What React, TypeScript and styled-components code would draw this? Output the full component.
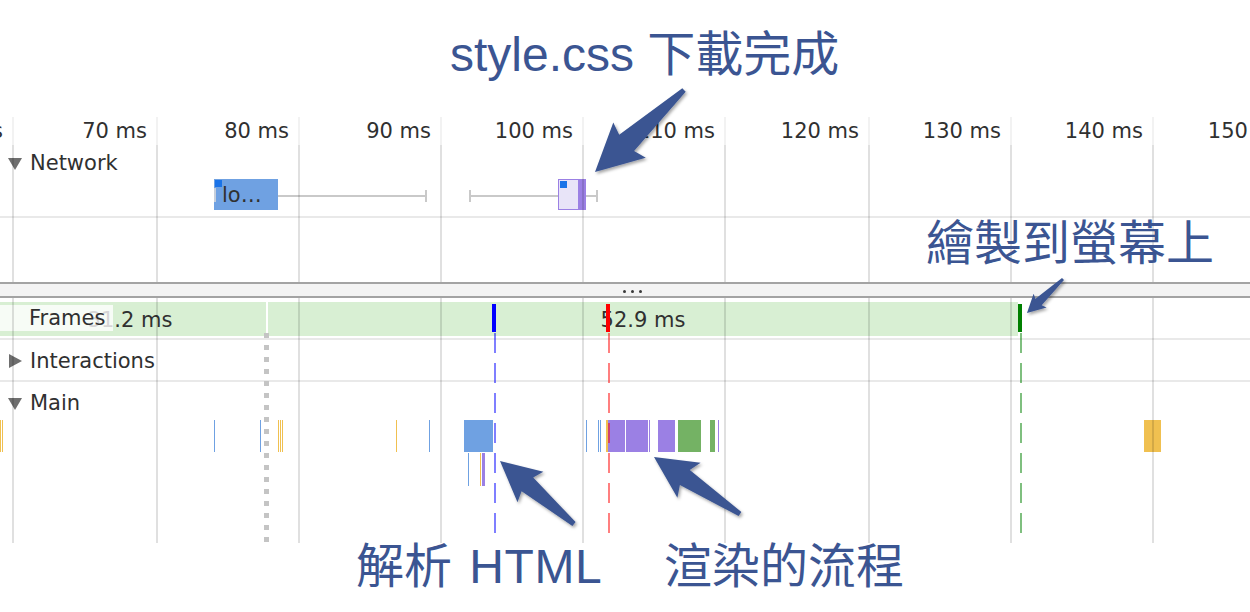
import React from "react";
import styled, { createGlobalStyle } from "styled-components";

const GlobalStyle = createGlobalStyle`
  html, body { margin: 0; padding: 0; background: #ffffff; }
  body { overflow: hidden; }
`;

const UI_FONT = `"DejaVu Sans", "Liberation Sans", sans-serif`;
const NOTE_FONT = `"Liberation Sans", "Noto Sans CJK TC", sans-serif`;
const NOTE_COLOR = "#3b5592";

const LINES = [13, 157, 299, 441, 583, 725, 869, 1011, 1153];

const COLORS = {
  B: "#6fa1e2",
  Y: "#f0c050",
  P: "#9b80e4",
  G: "#74b264",
};

type Ev = { x: number; w: number; c: keyof typeof COLORS; level: 0 | 1 };

const MAIN_EVENTS: Ev[] = [
  { x: 0, w: 1, c: "Y", level: 0 },
  { x: 2, w: 1, c: "Y", level: 0 },
  { x: 214, w: 1, c: "B", level: 0 },
  { x: 260, w: 1, c: "B", level: 0 },
  { x: 278, w: 1, c: "Y", level: 0 },
  { x: 280, w: 1, c: "Y", level: 0 },
  { x: 282, w: 1, c: "Y", level: 0 },
  { x: 396, w: 1, c: "Y", level: 0 },
  { x: 429, w: 1, c: "B", level: 0 },
  { x: 464, w: 29, c: "B", level: 0 },
  { x: 586, w: 1, c: "B", level: 0 },
  { x: 598, w: 1, c: "B", level: 0 },
  { x: 600, w: 1, c: "B", level: 0 },
  { x: 606, w: 1.5, c: "Y", level: 0 },
  { x: 608, w: 17, c: "P", level: 0 },
  { x: 626, w: 22, c: "P", level: 0 },
  { x: 648.5, w: 1, c: "P", level: 0 },
  { x: 658, w: 17, c: "P", level: 0 },
  { x: 678, w: 23, c: "G", level: 0 },
  { x: 710, w: 5, c: "G", level: 0 },
  { x: 718, w: 1, c: "P", level: 0 },
  { x: 1144, w: 17, c: "Y", level: 0 },
  { x: 468, w: 1, c: "B", level: 1 },
  { x: 480, w: 1, c: "Y", level: 1 },
  { x: 482, w: 3, c: "P", level: 1 },
];

const Root = styled.div`
  position: relative;
  width: 1250px;
  height: 612px;
  overflow: hidden;
  background: #ffffff;
  font-family: ${UI_FONT};
  font-size: 21px;
  color: #303030;
`;

const Timeline = styled.div`
  display: flex;
  flex-direction: column;
`;

const TopGap = styled.div`
  height: 117px;
  flex: none;
`;

const Pane = styled.div<{ $h: number }>`
  position: relative;
  height: ${(p) => p.$h}px;
  flex: none;
  display: flex;
  flex-direction: column;
`;

const GridLayer = styled.div`
  position: absolute;
  inset: 0;
  pointer-events: none;
  z-index: 4;
`;

const GridLine = styled.div<{ $x: number; $head?: boolean }>`
  position: absolute;
  top: 0;
  bottom: 0;
  left: ${(p) => p.$x - 1}px;
  width: 2px;
  background: ${(p) =>
    p.$head
      ? "linear-gradient(to bottom, rgba(0,0,0,0.05) 0 28px, rgba(0,0,0,0.12) 28px)"
      : "rgba(0,0,0,0.12)"};
`;

const Ruler = styled.div`
  display: flex;
  height: 28px;
  flex: none;
  margin-left: -130px;
`;

const RulerCell = styled.div<{ $w: number }>`
  width: ${(p) => p.$w}px;
  flex: none;
  box-sizing: border-box;
  padding-right: 10px;
  text-align: right;
  line-height: 28px;
  white-space: nowrap;
`;

const TrackHeader = styled.div<{ $h: number; $pt?: number }>`
  height: ${(p) => p.$h}px;
  flex: none;
  display: flex;
  align-items: center;
  gap: 8px;
  padding-left: 8px;
  padding-top: ${(p) => p.$pt ?? 0}px;
  box-sizing: border-box;
  white-space: nowrap;
`;

const TriangleDown = styled.span`
  width: 0;
  height: 0;
  border-left: 7px solid transparent;
  border-right: 7px solid transparent;
  border-top: 12px solid #6e6e6e;
  margin-top: 2px;
`;

const TriangleRight = styled.span`
  width: 0;
  height: 0;
  border-top: 7px solid transparent;
  border-bottom: 7px solid transparent;
  border-left: 13px solid #6e6e6e;
  margin-left: 1px;
`;

const Track = styled.div<{ $h: number }>`
  position: relative;
  height: ${(p) => p.$h}px;
  flex: none;
`;

const Divider = styled.div<{ $mt?: number }>`
  height: 2px;
  flex: none;
  margin-top: ${(p) => p.$mt ?? 0}px;
  background: #e9e9e9;
`;

const Blank = styled.div`
  flex: 1;
`;

const Whisker = styled.div<{ $x: number; $w: number; $start?: boolean; $end?: boolean }>`
  position: absolute;
  left: ${(p) => p.$x}px;
  width: ${(p) => p.$w}px;
  top: 17px;
  height: 2px;
  background: #c9c9c9;
  &::before,
  &::after {
    content: "";
    position: absolute;
    top: -5px;
    width: 2px;
    height: 12px;
    background: #c9c9c9;
  }
  &::before {
    left: 0;
    display: ${(p) => (p.$start ? "block" : "none")};
  }
  &::after {
    right: 0;
    display: ${(p) => (p.$end ? "block" : "none")};
  }
`;

const RequestBox = styled.div<{ $x: number; $w: number; $variant: "doc" | "css" }>`
  position: absolute;
  left: ${(p) => p.$x}px;
  width: ${(p) => p.$w}px;
  top: 1px;
  height: 31px;
  box-sizing: border-box;
  display: flex;
  align-items: center;
  overflow: hidden;
  background: ${(p) => (p.$variant === "doc" ? "#6fa1e2" : "#e8e4f8")};
  border: ${(p) => (p.$variant === "css" ? "1px solid #9b80e4" : "none")};
  padding-left: 8px;
  white-space: nowrap;
`;

const RequestIcon = styled.span`
  position: absolute;
  left: 1px;
  top: 1px;
  width: 7px;
  height: 7px;
  background: #1a73e8;
`;

const WaitStrip = styled.span`
  position: absolute;
  left: 0;
  top: 9px;
  bottom: 8px;
  width: 2px;
  background: #c6cfdc;
`;

const ReceiveStrip = styled.span`
  position: absolute;
  right: 0;
  top: 0;
  bottom: 0;
  width: 7px;
  background: #9b80e4;
`;

const Splitter = styled.div`
  height: 16px;
  flex: none;
  box-sizing: border-box;
  border-top: 2px solid #a3a3a3;
  border-bottom: 2px solid #a3a3a3;
  background: #f3f3f3;
  display: flex;
  align-items: center;
  justify-content: center;
  gap: 5px;
  padding-left: 15px;
  padding-top: 2px;
`;

const Dot = styled.span`
  width: 3px;
  height: 3px;
  border-radius: 50%;
  background: #3a3a3a;
`;

const FramesRow = styled.div`
  position: relative;
  margin-top: 4px;
  height: 34px;
  flex: none;
  display: flex;
  gap: 2px;
`;

const FrameBlock = styled.div<{ $w: number }>`
  width: ${(p) => p.$w}px;
  flex: none;
  background: #d8efd3;
  display: flex;
  align-items: center;
  justify-content: center;
  white-space: nowrap;
  padding-top: 1px;
  box-sizing: border-box;
`;

const FrameText = styled.span<{ $dx?: number }>`
  margin-left: ${(p) => p.$dx ?? 0}px;
`;

const FramesLabel = styled.div`
  position: absolute;
  left: 0;
  top: 3px;
  width: 113px;
  height: 26px;
  box-sizing: border-box;
  padding-left: 29px;
  background: rgba(255, 255, 255, 0.8);
  display: flex;
  align-items: center;
`;

const Event = styled.div<{ $x: number; $w: number; $c: string; $level: number }>`
  position: absolute;
  left: ${(p) => p.$x}px;
  width: ${(p) => p.$w}px;
  top: ${(p) => (p.$level === 0 ? 0 : 33)}px;
  height: ${(p) => (p.$level === 0 ? 32 : 33)}px;
  background: ${(p) => p.$c};
`;

const MarkerLayer = styled.div`
  position: absolute;
  inset: 0;
  pointer-events: none;
  z-index: 5;
`;

const Marker = styled.div<{ $x: number; $c: string }>`
  position: absolute;
  left: ${(p) => p.$x}px;
  top: 6px;
  width: 4px;
  height: 28px;
  background: ${(p) => p.$c};
`;

const DashLine = styled.div<{ $x: number; $c: string }>`
  position: absolute;
  left: ${(p) => p.$x}px;
  top: 35px;
  bottom: 0;
  width: 2px;
  background: repeating-linear-gradient(
    to bottom,
    ${(p) => p.$c} 0 20px,
    transparent 20px 30px
  );
`;

const DotLine = styled.div<{ $x: number }>`
  position: absolute;
  left: ${(p) => p.$x}px;
  top: 35px;
  bottom: 0;
  width: 5px;
  background: repeating-linear-gradient(
    to bottom,
    #c4c4c4 0 5px,
    transparent 5px 12px
  );
`;

const ArrowLayer = styled.svg`
  position: absolute;
  left: 0;
  top: 0;
  width: 1250px;
  height: 612px;
  pointer-events: none;
  z-index: 10;
  overflow: visible;
`;

const Note = styled.div<{ $x: number; $y: number; $ws?: number }>`
  position: absolute;
  left: ${(p) => p.$x}px;
  top: ${(p) => p.$y}px;
  z-index: 11;
  font-family: ${NOTE_FONT};
  font-size: 48px;
  line-height: 48px;
  color: ${NOTE_COLOR};
  white-space: nowrap;
  word-spacing: ${(p) => p.$ws ?? 0}px;
`;

const Wide = styled.span`
  letter-spacing: 0.6px;
`;

type Pt = [number, number];

function arrowPoints(
  tip: Pt,
  tail: Pt,
  L: number,
  notch: number,
  W: number,
  n: number,
  t: number
): string {
  const dx = tail[0] - tip[0];
  const dy = tail[1] - tip[1];
  const len = Math.hypot(dx, dy);
  const ux = dx / len;
  const uy = dy / len;
  const px = -uy;
  const py = ux;
  const at = (d: number, s: number): Pt => [tip[0] + ux * d + px * s, tip[1] + uy * d + py * s];
  const pts: Pt[] = [
    tip,
    at(L, W),
    at(notch, n),
    [tail[0] + px * t, tail[1] + py * t],
    [tail[0] - px * t, tail[1] - py * t],
    at(notch, -n),
    at(L, -W),
  ];
  return pts.map((p) => `${p[0].toFixed(1)},${p[1].toFixed(1)}`).join(" ");
}

const ARROWS = [
  arrowPoints([595, 172], [684, 90], 47, 43, 24, 11, 2.5),
  arrowPoints([1027, 313], [1063, 279], 18, 16, 9.5, 4.5, 1.5),
  arrowPoints([500, 461], [574, 524], 40, 36, 20, 9, 2.5),
  arrowPoints([654, 457], [740, 514], 42, 37, 21, 9, 2.5),
];

const rulerCells = (() => {
  const edges = [LINES[0] - 143, ...LINES, LINES[LINES.length - 1] + 143];
  const cells: { w: number; label: string }[] = [];
  for (let i = 1; i < edges.length; i++) {
    cells.push({ w: edges[i] - edges[i - 1], label: `${60 + (i - 1) * 10} ms` });
  }
  return cells;
})();

export default function App() {
  return (
    <Root>
      <GlobalStyle />
      <Timeline>
        <TopGap />
        <Pane $h={165}>
          <Ruler>
            {rulerCells.map((c, i) => (
              <RulerCell key={i} $w={c.w}>
                {c.label}
              </RulerCell>
            ))}
          </Ruler>
          <TrackHeader $h={33} $pt={2}>
            <TriangleDown />
            Network
          </TrackHeader>
          <Track $h={38}>
            <RequestBox $x={214} $w={64} $variant="doc">
              <WaitStrip />
              <RequestIcon />
              lo…
            </RequestBox>
            <Whisker $x={278} $w={149} $end />
            <Whisker $x={469} $w={89} $start />
            <RequestBox $x={558} $w={28} $variant="css">
              <RequestIcon />
              <ReceiveStrip />
            </RequestBox>
            <Whisker $x={586} $w={12} $end />
          </Track>
          <Divider />
          <Blank />
          <GridLayer>
            {LINES.map((x) => (
              <GridLine key={x} $x={x} $head />
            ))}
          </GridLayer>
        </Pane>
        <Splitter>
          <Dot />
          <Dot />
          <Dot />
        </Splitter>
        <Pane $h={245}>
          <FramesRow>
            <FrameBlock $w={266}>
              <FrameText $dx={-6}>31.2 ms</FrameText>
            </FrameBlock>
            <FrameBlock $w={750}>
              <FrameText>52.9 ms</FrameText>
            </FrameBlock>
            <FramesLabel>Frames</FramesLabel>
          </FramesRow>
          <Divider $mt={2} />
          <TrackHeader $h={40} $pt={2}>
            <TriangleRight />
            Interactions
          </TrackHeader>
          <Divider />
          <TrackHeader $h={38} $pt={3}>
            <TriangleDown />
            Main
          </TrackHeader>
          <Track $h={123}>
            {MAIN_EVENTS.map((e, i) => (
              <Event key={i} $x={e.x} $w={e.w} $c={COLORS[e.c]} $level={e.level} />
            ))}
          </Track>
          <GridLayer>
            {LINES.map((x) => (
              <GridLine key={x} $x={x} />
            ))}
          </GridLayer>
          <MarkerLayer>
            <DotLine $x={264} />
            <DashLine $x={494} $c="rgba(0,0,255,0.5)" />
            <DashLine $x={608} $c="rgba(255,0,0,0.5)" />
            <DashLine $x={1020} $c="rgba(0,128,0,0.5)" />
            <Marker $x={492} $c="#0000ff" />
            <Marker $x={606} $c="#ff0000" />
            <Marker $x={1018} $c="#008000" />
          </MarkerLayer>
        </Pane>
      </Timeline>

      <ArrowLayer viewBox="0 0 1250 612">
        <defs>
          <filter id="arrowShadow" x="-20%" y="-20%" width="140%" height="140%">
            <feDropShadow dx="1.5" dy="2" stdDeviation="1.5" floodColor="#000" floodOpacity="0.35" />
          </filter>
        </defs>
        {ARROWS.map((pts, i) => (
          <polygon key={i} points={pts} fill={NOTE_COLOR} filter="url(#arrowShadow)" />
        ))}
      </ArrowLayer>

      <Note $x={450} $y={31}>style.css 下載完成</Note>
      <Note $x={926} $y={220}>繪製到螢幕上</Note>
      <Note $x={356} $y={543} $ws={4}>
        解析 <Wide>HTML</Wide>
      </Note>
      <Note $x={664} $y={543}>渲染的流程</Note>
    </Root>
  );
}
